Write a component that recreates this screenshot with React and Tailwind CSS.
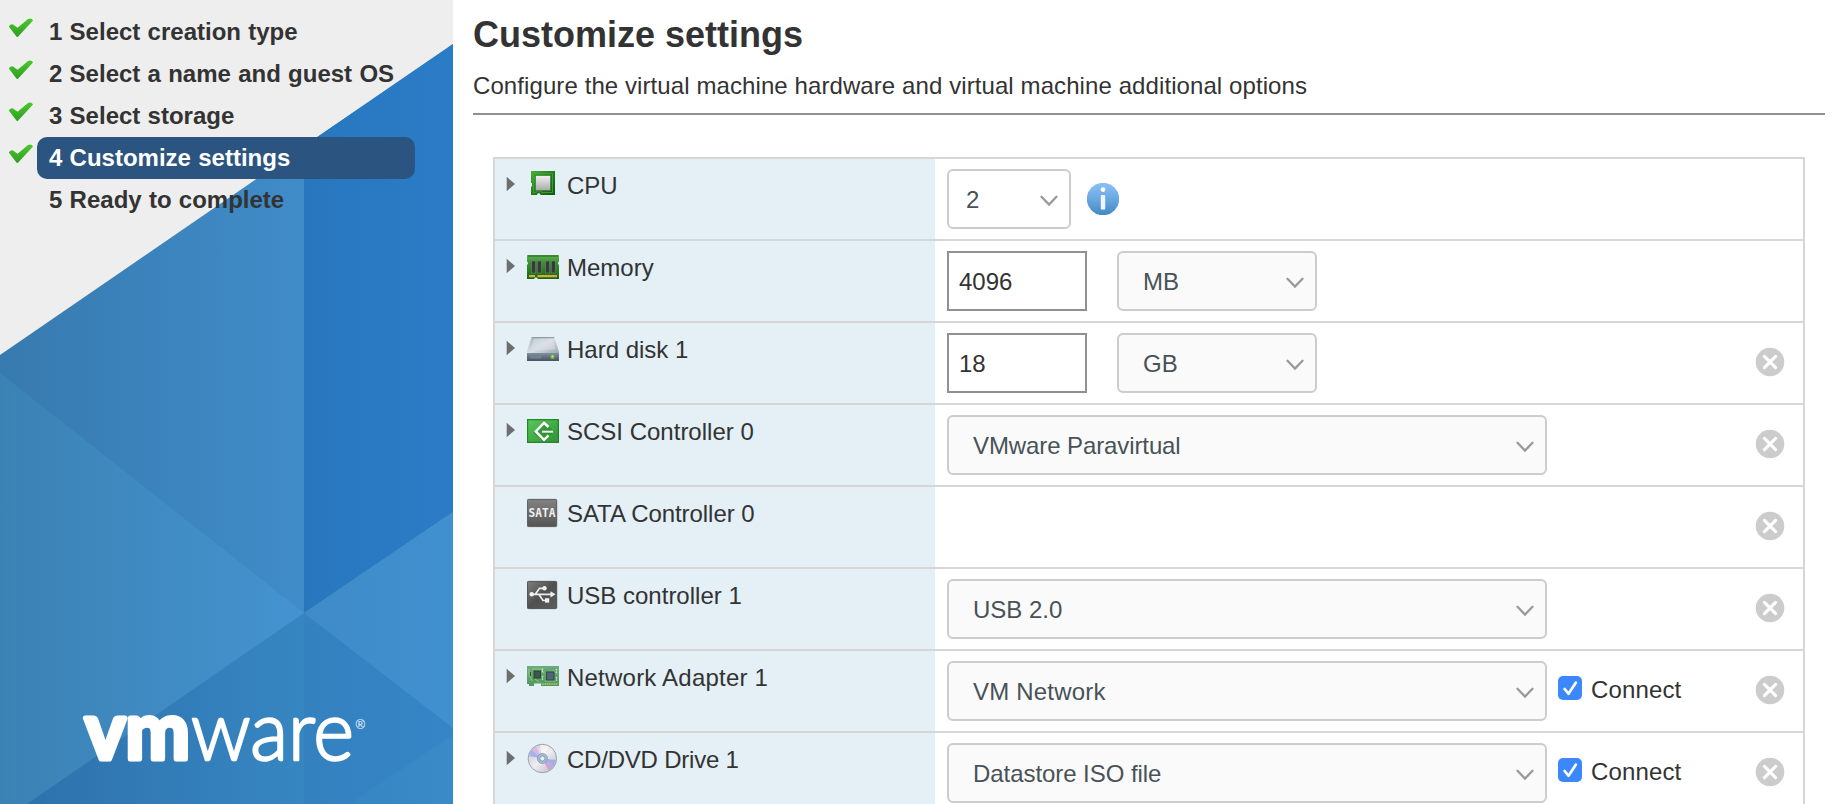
import React from "react";

const steps = [
  { label: "1 Select creation type", done: true },
  { label: "2 Select a name and guest OS", done: true },
  { label: "3 Select storage", done: true },
  { label: "4 Customize settings", done: true, active: true },
  { label: "5 Ready to complete" },
];

function Check() {
  return (
    <svg className="h-[22px] w-[26px]" viewBox="0 0 26 22">
      <defs>
        <linearGradient id="chk" x1="0" y1="0" x2="0" y2="1">
          <stop offset="0" stopColor="#4cc82e" />
          <stop offset="1" stopColor="#2f9e22" />
        </linearGradient>
      </defs>
      <path
        d="M0.8 9.4 Q2.6 6.6 5 7.4 L9.6 10.8 L20 2 Q23.5 0.2 25 3.6 L10 19.8 Q9.2 20.4 8.4 19.6 Z"
        fill="url(#chk)"
      />
    </svg>
  );
}

function Backdrop() {
  const g = (id, a, b, x1 = 0, x2 = 453) => (
    <linearGradient id={id} gradientUnits="userSpaceOnUse" x1={x1} y1="0" x2={x2} y2="0">
      <stop offset="0" stopColor={a} />
      <stop offset="1" stopColor={b} />
    </linearGradient>
  );
  return (
    <svg className="absolute inset-0 h-[804px] w-[453px]" viewBox="0 0 453 804">
      <defs>
        {g("b1", "#377aaf", "#408cc9", 0, 304)}
        {g("b2", "#2877be", "#2b7cc7", 304, 453)}
        {g("b3", "#3b82b4", "#4493d0", 0, 304)}
        {g("b4", "#2e72ad", "#3686c2", 27, 304)}
        {g("b5", "#3f8bc8", "#4190cf", 304, 453)}
        {g("b6", "#3381bf", "#3685c6", 304, 453)}
        {g("b7", "#3786c4", "#398ac7", 350, 453)}
      </defs>
      <path d="M0 355 L453 44 V804 H0Z" fill="url(#b1)" />
      <path d="M304 146 L453 44 V512 L304 613Z" fill="url(#b2)" />
      <path d="M0 373 L304 613 L27 804 H0Z" fill="url(#b3)" />
      <path d="M304 613 V804 H27Z" fill="url(#b4)" />
      <path d="M304 613 L453 512 V728Z" fill="url(#b5)" />
      <path d="M304 613 L453 728 V804 H304Z" fill="url(#b6)" />
      <path d="M453 735 V804 H350Z" fill="url(#b7)" />
      <g fill="#fff" stroke="#fff" strokeLinejoin="round" fontFamily="Lato, sans-serif">
        <text x="85" y="758.5" fontSize="80" fontWeight="700" strokeWidth="5" textLength="105" lengthAdjust="spacingAndGlyphs">vm</text>
        <text x="191" y="759.5" fontSize="83" fontWeight="300" strokeWidth="2.4" textLength="163" lengthAdjust="spacingAndGlyphs">ware</text>
        <text x="355.5" y="729" fontSize="13" strokeWidth="0" fontFamily="Liberation Sans, sans-serif">®</text>
      </g>
    </svg>
  );
}

function Svg({ children }) {
  return (
    <svg className="h-8 w-8" viewBox="0 0 32 32">
      {children}
    </svg>
  );
}

const icons = {
  cpu: (
    <Svg>
      <defs>
        <linearGradient id="cpuG" x1="0" y1="0" x2="1" y2="1">
          <stop offset="0" stopColor="#43b336" />
          <stop offset="0.5" stopColor="#1f8018" />
          <stop offset="1" stopColor="#0d5a0c" />
        </linearGradient>
        <linearGradient id="cpuS" x1="0" y1="0" x2="0" y2="1">
          <stop offset="0" stopColor="#f2f2f2" />
          <stop offset="1" stopColor="#a9a9a9" />
        </linearGradient>
      </defs>
      <path d="M4 2H28V26H13.5C13.5 23.8 10 23.8 10 26H4V17.5H5V14H4Z" fill="url(#cpuG)" />
      <path d="M6.5 4.5H25.5V23.5H15L12 21.5L8.5 23.5H6.5Z" fill="none" stroke="#4f9f45" strokeWidth="0.8" />
      <rect x="8.5" y="6.5" width="15" height="15" fill="url(#cpuS)" stroke="#3f7a3a" strokeWidth="0.7" />
    </Svg>
  ),
  memory: (
    <Svg>
      <defs>
        <linearGradient id="memG" x1="0" y1="0" x2="0" y2="1">
          <stop offset="0" stopColor="#63b055" />
          <stop offset="0.3" stopColor="#3c9335" />
          <stop offset="1" stopColor="#17650f" />
        </linearGradient>
      </defs>
      <path d="M0 4H32V10.5Q30 12 32 14V28H11Q9 24.5 7 28H0V14Q2 12 0 10.5Z" fill="url(#memG)" />
      <path d="M1 5H31" stroke="#2c7c25" strokeWidth="1.4" />
      <path d="M2 24H8V26.3H2ZM10.5 24H30V26.3H10.5Z" fill="#d2ad3b" />
      <g fill="#363a3b" stroke="#6f8b6d" strokeWidth="0.6">
        <rect x="4.5" y="10" width="4.2" height="12" />
        <rect x="10.2" y="10" width="4.2" height="12" />
        <rect x="18.5" y="10" width="4.2" height="12" />
        <rect x="24.2" y="10" width="4.2" height="12" />
      </g>
    </Svg>
  ),
  disk: (
    <Svg>
      <defs>
        <linearGradient id="hdT" x1="0" y1="0" x2="1" y2="1">
          <stop offset="0" stopColor="#a6b0ba" />
          <stop offset="0.5" stopColor="#d9dfe4" />
          <stop offset="1" stopColor="#98a3ad" />
        </linearGradient>
        <linearGradient id="hdB" x1="0" y1="0" x2="0" y2="1">
          <stop offset="0" stopColor="#8190a0" />
          <stop offset="1" stopColor="#46535f" />
        </linearGradient>
      </defs>
      <path d="M4.5 4H27.5L32 19V21H0V19Z" fill="url(#hdT)" />
      <path d="M5 4.6H27" stroke="#8b959e" strokeWidth="1" />
      <path d="M4 16L7 6H25L28.5 16Q16 18.5 4 16Z" fill="#dce2e8" opacity="0.5" />
      <path d="M0 20H32V28H0Z" fill="url(#hdB)" />
      <rect x="3" y="22.5" width="11" height="3" fill="#728090" />
      <circle cx="25.5" cy="23.8" r="2.2" fill="#77bd45" />
      <circle cx="25.5" cy="23.3" r="0.9" fill="#c5f08c" />
    </Svg>
  ),
  scsi: (
    <Svg>
      <defs>
        <linearGradient id="scG" x1="0" y1="0" x2="1" y2="1">
          <stop offset="0" stopColor="#57c957" />
          <stop offset="1" stopColor="#2f9235" />
        </linearGradient>
      </defs>
      <rect x="0.6" y="4.6" width="30.8" height="22.8" fill="url(#scG)" stroke="#25832a" strokeWidth="1.2" />
      <path d="M17 5L26.5 16.7L17 27L6 18Z" fill="#237d29" opacity="0.5" />
      <path d="M21.5 12L17 7.8L8.8 16.5L17 24.8L21.5 20.4" fill="none" stroke="#fff" strokeWidth="2.5" />
      <path d="M26 16.7H15" stroke="#e3f3e3" strokeWidth="2" />
    </Svg>
  ),
  sata: (
    <Svg>
      <defs>
        <linearGradient id="saG" x1="0" y1="0" x2="0" y2="1">
          <stop offset="0" stopColor="#828282" />
          <stop offset="1" stopColor="#555" />
        </linearGradient>
      </defs>
      <rect x="0.4" y="2.4" width="29.3" height="27.2" rx="1" fill="url(#saG)" stroke="#5b5b5b" />
      <text x="1.6" y="19.6" fontSize="12" fontFamily="DejaVu Sans Mono, monospace" fontWeight="700" fill="#f0f0f0" textLength="27" lengthAdjust="spacingAndGlyphs">SATA</text>
    </Svg>
  ),
  usb: (
    <Svg>
      <defs>
        <linearGradient id="usG" x1="0" y1="0" x2="1" y2="1">
          <stop offset="0" stopColor="#7e7e7e" />
          <stop offset="0.5" stopColor="#505050" />
          <stop offset="1" stopColor="#5e5e5e" />
        </linearGradient>
      </defs>
      <rect x="0.4" y="2.4" width="29.3" height="27.2" rx="1" fill="url(#usG)" stroke="#505050" />
      <g fill="none" stroke="#ededed" strokeWidth="1.7">
        <path d="M4 15.3H25M8.5 15L12.5 9.3H17M12 15.5L16 21.5H19.5" />
      </g>
      <g fill="#f1f1f1">
        <circle cx="4.7" cy="15.3" r="2.2" />
        <circle cx="17.5" cy="9.3" r="2.2" />
        <rect x="18" y="19.2" width="4.2" height="4.4" />
        <path d="M23.5 12.2L28.5 15.3L23.5 18.4Z" />
      </g>
    </Svg>
  ),
  network: (
    <Svg>
      <defs>
        <linearGradient id="neG" x1="0" y1="0" x2="0" y2="1">
          <stop offset="0" stopColor="#6bac7b" />
          <stop offset="1" stopColor="#4f9a5d" />
        </linearGradient>
      </defs>
      <path d="M0 5H32V25H14V22.5H7V25H2V23H0Z" fill="url(#neG)" />
      <path d="M14.5 23H31" stroke="#c4c46a" strokeWidth="1.6" strokeDasharray="1.2 0.6" />
      <g fill="none" stroke="#a9cb78" strokeWidth="0.8">
        <path d="M2 8V14L5 20M5 8H14L17 12M8 18L12 21M26 9L29 12M18 20H28" />
      </g>
      <rect x="7" y="10" width="6.5" height="7" fill="#3d5650" stroke="#274238" />
      <rect x="19.5" y="11" width="7.5" height="8" fill="#50657b" stroke="#30493f" />
      <path d="M15.5 7.5V12M15.5 15V19M29.5 8V13M29.5 16V20" stroke="#dbe7d0" strokeWidth="1.2" strokeDasharray="1.4 1" />
      <path d="M3.5 11V15" stroke="#314e3c" />
    </Svg>
  ),
  cd: (
    <Svg>
      <defs>
        <linearGradient id="cdG" x1="0" y1="0" x2="1" y2="1">
          <stop offset="0" stopColor="#c4c4ca" />
          <stop offset="0.5" stopColor="#ededf2" />
          <stop offset="1" stopColor="#b3b3bb" />
        </linearGradient>
      </defs>
      <circle cx="15.4" cy="15.5" r="14.2" fill="url(#cdG)" stroke="#989aa0" strokeWidth="0.9" />
      <path d="M15.4 15.5L2.2 13.2A13.4 13.4 0 0 1 5 7Z" fill="#a6b2ec" />
      <path d="M15.4 15.5L5 7A13.4 13.4 0 0 1 9 3.7Z" fill="#e0b4e3" />
      <path d="M15.4 15.5L28.6 17A13.4 13.4 0 0 1 26.5 23Z" fill="#a1afed" />
      <path d="M15.4 15.5L26.5 23A13.4 13.4 0 0 1 21.5 27.4Z" fill="#cda4dc" />
      <path d="M15.4 15.5L13 2.3A13.4 13.4 0 0 1 22 3.8Z" fill="#fff" opacity="0.6" />
      <circle cx="15.4" cy="15.5" r="5" fill="#a9bcd3" stroke="#8196b2" strokeWidth="0.8" />
      <circle cx="15.4" cy="15.5" r="2.6" fill="#e7eff6" stroke="#7f95b4" strokeWidth="0.9" />
    </Svg>
  ),
};

function Select({ value, className = "w-[600px] bg-[#fafafa] pl-6" }) {
  return (
    <div
      className={
        "flex h-[60px] shrink-0 items-center justify-between rounded-[6px] border-2 border-[#ccc] pr-[11px] text-[#485257] " +
        className
      }
    >
      <span className="pt-[2px] leading-[54px]">{value}</span>
      <svg className="mt-[3px] h-[12px] w-[18px]" viewBox="0 0 18 12">
        <path d="M1.5 1.8L9 9.5L16.5 1.8" fill="none" stroke="#999" strokeWidth="2.3" strokeLinecap="round" />
      </svg>
    </div>
  );
}

function Field({ value }) {
  return (
    <div className="mr-[30px] h-[60px] w-[140px] shrink-0 border-2 border-[#919191] bg-white pt-[2px] pl-[10px] leading-[54px] text-[#333]">
      {value}
    </div>
  );
}

function Info() {
  return (
    <svg className="mt-[14px] ml-4 h-8 w-8" viewBox="0 0 32 32">
      <defs>
        <linearGradient id="inf" x1="0" y1="0" x2="0" y2="1">
          <stop offset="0" stopColor="#8cc0f6" />
          <stop offset="0.5" stopColor="#6aa8e2" />
          <stop offset="1" stopColor="#4388c2" />
        </linearGradient>
      </defs>
      <circle cx="16" cy="16" r="16.2" fill="url(#inf)" />
      <circle cx="16" cy="6.6" r="2.4" fill="#fff" />
      <rect x="13.8" y="12" width="4.4" height="14.6" rx="0.8" fill="#eef5fc" />
    </svg>
  );
}

function Connect() {
  return (
    <label className="ml-[11px] flex items-start">
      <svg className="mt-[15px] h-6 w-6" viewBox="0 0 24 24">
        <rect width="24" height="24" rx="5" fill="#3b88fd" />
        <path d="M6.6 13L10.5 17.7L17.8 6.7" fill="none" stroke="#fff" strokeWidth="2.7" strokeLinecap="round" strokeLinejoin="round" />
      </svg>
      <span className="mt-2 ml-[9px] leading-[42px] tracking-[0.15px]">Connect</span>
    </label>
  );
}

function Remove() {
  return (
    <svg className="ml-auto mt-[14px] h-[30px] w-[30px]" viewBox="0 0 30 30">
      <circle cx="15" cy="15" r="14.3" fill="#ccc" />
      <path d="M9.4 9.4L20.6 20.6M20.6 9.4L9.4 20.6" stroke="#fff" strokeWidth="3.1" strokeLinecap="round" />
    </svg>
  );
}

const rows = [
  { icon: "cpu", label: "CPU", expand: true, body: <><Select value="2" className="w-[124px] bg-white pl-[17px]" /><Info /></> },
  { icon: "memory", label: "Memory", expand: true, body: <><Field value="4096" /><Select value="MB" className="w-[200px] bg-[#fafafa] pl-6" /></> },
  { icon: "disk", label: "Hard disk 1", expand: true, removable: true, body: <><Field value="18" /><Select value="GB" className="w-[200px] bg-[#fafafa] pl-6" /></> },
  { icon: "scsi", label: "SCSI Controller 0", expand: true, removable: true, body: <Select value="VMware Paravirtual" className="w-[600px] bg-[#fafafa] pl-6 tracking-[-0.1px]" /> },
  { icon: "sata", label: "SATA Controller 0", removable: true, tracking: "tracking-[-0.06px]" },
  { icon: "usb", label: "USB controller 1", removable: true, body: <Select value="USB 2.0" /> },
  { icon: "network", label: "Network Adapter 1", expand: true, removable: true, tracking: "tracking-[0.22px]", body: <><Select value="VM Network" className="w-[600px] bg-[#fafafa] pl-6 tracking-[0.2px]" /><Connect /></> },
  { icon: "cd", label: "CD/DVD Drive 1", expand: true, removable: true, tracking: "tracking-[-0.22px]", body: <><Select value="Datastore ISO file" className="w-[600px] bg-[#fafafa] pl-6 tracking-[-0.06px]" /><Connect /></> },
];

function Row({ row }) {
  return (
    <div className="flex h-[82px] border-b-2 border-[#d6d6d6]">
      <div className="flex w-[440px] shrink-0 items-start bg-[#e4eff6] pl-[11px]">
        <svg className="mt-[17px] mr-3 h-4 w-[9px]" viewBox="0 0 9 16">
          {row.expand && <path d="M0.7 0.8L9 8L0.7 15.2Z" fill="#6c6e70" />}
        </svg>
        <div className="mt-[10px]">{icons[row.icon]}</div>
        <span className={"mt-[6px] ml-2 leading-[42px] " + (row.tracking || "")}>{row.label}</span>
      </div>
      <div className="flex flex-1 items-start pt-[10px] pr-[18px] pl-3">
        {row.body}
        {row.removable && <Remove />}
      </div>
    </div>
  );
}

export default function App() {
  return (
    <div className="flex h-[804px] w-[1838px] overflow-hidden bg-white font-['Liberation_Sans',Arial,sans-serif] text-[24px] text-[#333]">
      <aside className="relative w-[453px] shrink-0 bg-[#eee]">
        <Backdrop />
        <ol className="relative pt-[11px] font-bold">
          {steps.map((s) => (
            <li key={s.label} className="flex h-[42px] items-start pl-2">
              <span className="mt-[6px] h-[22px] w-[29px]">{s.done && <Check />}</span>
              <span
                className={
                  "h-[42px] w-[378px] rounded-[10px] pl-3 leading-[42px] whitespace-nowrap [word-spacing:0.6px] " +
                  (s.active ? "bg-[#2b5480] text-white" : "")
                }
              >
                {s.label}
              </span>
            </li>
          ))}
        </ol>
      </aside>
      <main className="flex-1 pr-[13px] pl-5">
        <header className="border-b-2 border-[#919191] pt-[14px] pb-[6px]">
          <h1 className="text-[36px] leading-[42px] font-bold">Customize settings</h1>
          <p className="mt-[9px] leading-[42px] tracking-[0.09px]">
            Configure the virtual machine hardware and virtual machine additional options
          </p>
        </header>
        <section className="mt-[42px] mr-5 ml-5 border-2 border-b-0 border-[#d6d6d6]">
          {rows.map((r) => (
            <Row key={r.label} row={r} />
          ))}
        </section>
      </main>
    </div>
  );
}
